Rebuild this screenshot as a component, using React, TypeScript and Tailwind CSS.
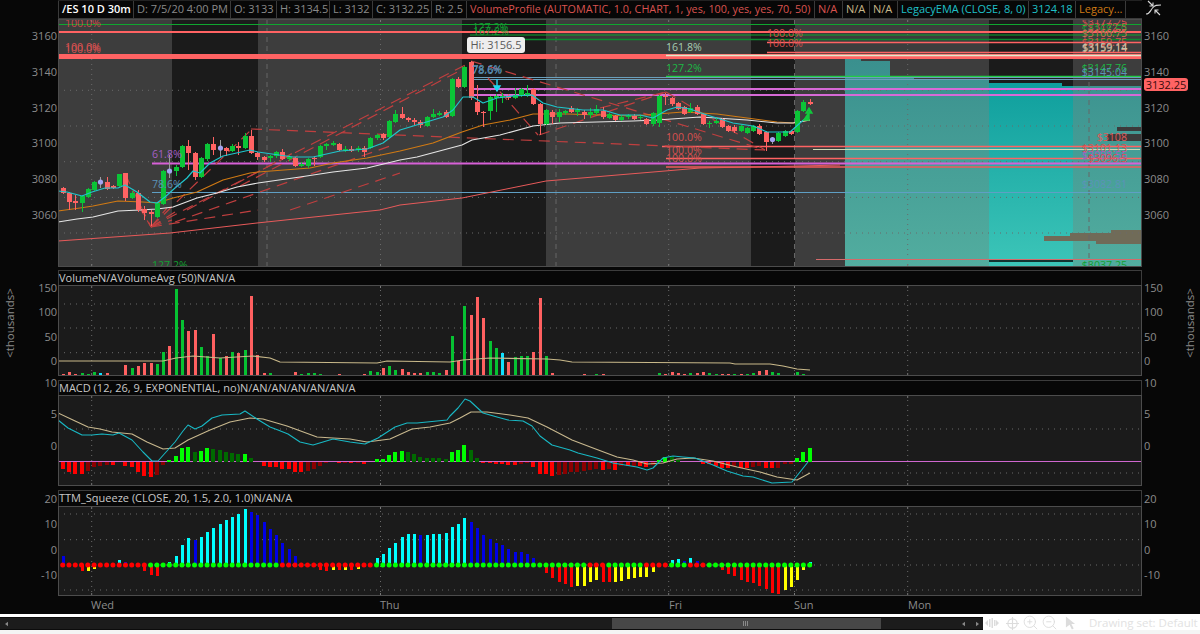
import React from "react";
import { ZoomIn, ZoomOut } from "lucide-react";

const X = (i: number) => 62.7 + 6.277 * i;
const GREEN = "#0bc437";
const RED = "#ff6363";

// top, bottom, wickTop, wickBottom, type
type C = [number, number, number, number, "g" | "r" | "d"];
const candles: C[] = [
  [188, 193, 187, 194, "r"], [193, 202, 192, 210, "r"], [201, 203, 195, 210, "r"], [196, 203, 195, 212, "g"],
  [189, 197, 188, 198, "g"], [182, 190, 181, 191, "g"], [182, 183, 177, 188, "d"], [182, 188.5, 177, 190, "r"],
  [186, 187.5, 185, 189, "r"], [174, 186, 174, 187, "g"], [173, 198, 173, 201, "r"], [193, 198, 191, 199, "g"],
  [193, 210, 190, 212, "r"], [209, 213, 206, 220, "r"], [212, 214, 210, 226, "r"], [203, 217, 202, 218, "g"],
  [171, 204, 170, 205, "g"], [171, 172, 155, 178, "d"], [167, 171, 165, 176, "g"], [146, 167, 145, 168, "g"],
  [146, 153, 140, 170, "r"], [153, 177, 152, 180, "r"], [158, 177, 157, 178, "g"], [144, 159, 143, 161, "g"],
  [144, 150, 137, 155, "r"], [148, 149, 140, 157, "d"], [148, 151, 147, 156, "r"], [146, 151, 144, 152, "g"],
  [146, 147.5, 142, 155, "r"], [136, 148, 133, 149, "g"], [136, 153, 130, 154, "r"], [153, 157, 152, 160, "r"],
  [157, 160, 156, 162, "r"], [156, 158, 155, 162, "g"], [152, 156, 151, 158, "g"], [152, 159, 149, 160, "r"],
  [157, 159, 155, 161, "g"], [158, 166, 157, 167, "r"], [164, 166, 162, 167, "g"], [159, 166, 158, 168, "g"],
  [158, 159, 156, 166, "r"], [146, 157, 145, 158, "g"], [144, 146, 143, 150, "g"], [143, 145, 141, 146, "g"],
  [144, 150, 143, 151, "r"], [149, 151, 146, 152, "g"], [149, 151, 146, 152, "r"], [148, 150, 146, 152, "g"],
  [148, 152, 146, 157, "r"], [138, 148, 137, 149, "g"], [135, 138, 134, 140, "g"], [134, 138, 133, 140, "r"],
  [121, 137, 120, 138, "g"], [114, 122, 110, 123, "g"], [114, 118, 107, 119, "r"], [118, 120, 117, 122, "r"],
  [120, 122, 118, 125, "r"], [122, 125, 120, 128, "r"], [117, 126, 116, 127, "g"], [114, 117, 109, 118, "g"],
  [113, 115, 111, 116, "g"], [112, 117, 110, 118, "r"], [79, 116, 78, 117, "g"], [79, 87, 77, 88, "r"],
  [67, 87, 66, 88, "g"], [62, 98, 61, 100, "r"], [102, 112, 85, 115, "r"], [111.5, 113, 111, 127, "r"],
  [97, 111, 96, 120, "g"], [96, 97.5, 94, 112, "g"], [95.5, 97, 93, 103, "g"], [96, 98, 94, 100, "r"],
  [95, 98, 88, 99, "g"], [89, 96, 88, 97, "g"], [93, 95, 85, 97, "g"], [89, 104, 88, 105, "r"],
  [104, 124, 103, 135, "r"], [110, 124, 109, 125, "g"], [112, 117, 110, 124, "r"], [112, 117, 109, 122, "g"],
  [111, 113, 110, 115, "g"], [108, 112, 106, 113, "r"], [110, 112, 108, 116, "g"], [112, 115, 110, 119, "r"],
  [112, 115, 108, 118, "g"], [109, 113, 105, 115, "g"], [111, 117, 107, 119, "r"], [114, 118, 113, 119, "g"],
  [116, 120, 115, 121, "r"], [117, 120, 115, 121, "g"], [115, 117, 114, 119, "g"], [116, 119, 114, 120, "r"],
  [116.5, 118, 115, 120, "g"], [119, 124, 118, 125, "r"], [113, 124, 112, 126, "g"], [96, 123, 95, 127, "g"],
  [95.5, 97, 93, 105, "r"], [98, 104, 97, 106, "r"], [103, 109, 102, 110, "r"], [107, 114, 106, 115, "r"],
  [108, 112, 103, 113, "g"], [107, 114, 105, 115, "r"], [114, 124, 113, 125, "r"], [122.5, 124, 121, 128, "g"],
  [121, 122.5, 118, 124, "g"], [119, 127, 118, 128, "r"], [126, 131, 125, 132, "r"], [127, 131, 125, 133, "r"],
  [126, 131, 125, 132, "g"], [128, 133, 127, 134, "g"], [126, 131, 125, 132, "g"], [126, 134, 124, 135, "r"],
  [132, 142, 131, 151, "r"], [139.5, 140.5, 137, 144, "d"], [133, 141, 132, 142, "g"], [131, 136, 130, 137, "g"],
  [131, 134, 130, 135, "r"], [111, 132, 110, 133, "g"], [102, 111, 100, 112, "g"], [102, 103.5, 99, 105, "r"],
];

const vol = [
  -4, -10, -5, 7, 5, 10, 8, -8, 2, 2, -32, 22, -29, -37, -39, 35, 70, -88, 260, 168,
  -135, -138, 85, 60, -125, 53, -58, 72, -68, 78, -240, -62, -8, 8, 2, -2, -2, -12, 6, 8,
  8, 6, 2, 2, -6, 0, -2, 2, -6, 14, 11, -22, 30, 18,
  -20, -12, -7, -7, 12, 10, 7, -18, 120, -45, 210, -182, -237, -172, 105, 82, 68, -42, 55, 60,
  58, -72, -232, 60, -8, 0, 0, 0, -2, -5, 2, 5, -5, 2, -2, 0, 0, -2, 0, 0,
  2, 7, -5, -10, -7, -5, 7, -7, -10, 7, 4, -5, -5, 5, -5, 5, 7, -15, -17, 10,
  7, 2, -2, 12, 5, 0,
];

const macd = [
  -22, -30, -36, -36, -27, -16, -12, -10, -10, -2,
  -14, -16, -30, -42, -46, -40, -10, 6, 18, 40,
  45, 28, 32, 40, 38, 34, 28, 26, 22, 23,
  10, -2, -12, -16, -16.5, -22, -22.5, -30, -32, -28,
  -22, -12, -4, 0, -4, -3, -4, -3, -6, 0,
  8, 9, 20, 28,
  32, 28, 24, 15, 12, 12, 12, 8, 28, 34,
  50, 34, 10, -4, -5, -6, -8, -10, -10.5, -6,
  -5.5, -16, -36, -38, -42, -40, -36, -32, -31, -28,
  -26, -22, -24, -22, -24, -14, -14, -12, -14, -16,
  -10, 6, 14, 13, 6, 0, 0, 0, -6, -8,
  -12, -18, -18.5, -14, -20, -20, -16, -14, -18, -20,
  -18, -8, -6, 10, 28, 40,
];

const ttm = [
  26, 0, 0, -18, -17, -12, 0, 0, 0, 16,
  10, 0, 0, -18, -30, -32, -6, 10, 28, 60,
  80, 75, 83, 98, 110, 124, 134, 145, 152, 168,
  160, 150, 130, 108, 90, 65, 48, 26, 0, 0,
  0, -14, -18, -14, -16, -14, -16, -12, -6, 0,
  22, 32, 50, 66,
  83, 92, 94, 90, 91, 92, 94, 95, 114, 124,
  142, 130, 112, 90, 78, 66, 60, 48, 40, 39,
  34, 22, 0, -24, -38, -50, -58, -66, -64, -63,
  -52, -46, -50, -52, -51, -48, -42, -40, -36, -35,
  -22, 0, 0, 16, 18, 12, 20, 12, 0, 0,
  0, -16, -26, -34, -44, -50, -54, -62, -72, -85,
  -86, -76, -66, -44, -14, 8,
];

const redDot = (i: number) =>
  i <= 13 || (i >= 35 && i <= 49) || (i >= 84 && i <= 86) || (i >= 93 && i <= 96) || (i >= 100 && i <= 102);

const pts = (a: number[][]) => a.map((p) => p.join(",")).join(" ");

const ema8 = [[58,191],[67,192],[82,196],[92,192],[105,188],[118,188],[125,185],[137,192],[150,202],[157,203],[165,197],[175,188],[187,178],[193,171],[200,173],[210,163],[223,156],[250,150],[258,152],[293,157],[313,157],[340,151],[367,149],[383,143],[400,130],[443,117],[453,110],[463,97],[473,97],[483,103],[497,98],[513,96],[532,95],[543,103],[557,107],[583,110],[603,110],[620,115],[640,115],[653,118],[667,110],[677,107],[690,109],[707,115],[733,123],[753,126],[767,132],[790,132],[800,123],[806,118]];
const emaOrange = [[58,211],[80,208],[93,206],[118,201],[143,202],[157,203],[173,198],[197,192],[223,180],[250,173],[258,172],[310,168],[333,163],[367,158],[400,151],[433,143],[462,132],[483,125],[510,120],[533,114],[567,114],[633,116],[657,114],[683,112],[717,114],[747,118],[777,122],[793,123],[810,120]];
const emaWhite = [[58,222],[77,219],[93,217],[118,211],[140,210],[157,209],[173,207],[197,198],[217,193],[237,187],[258,183],[300,177],[333,172],[367,168],[400,160],[417,157],[462,145],[472,140],[500,135],[533,126],[560,123],[633,121],[657,120],[700,117],[747,120],[777,123],[793,123],[810,120]];
const sma200 = [[58,241],[170,233],[257,223],[380,210],[400,205],[462,198],[546,181],[665,171],[700,168],[800,166],[840,165]];

const macdCyan = [[58,420],[68,428],[82,435],[92,435],[102,434],[113,435],[119,433],[132,440],[143,452],[152,461],[158,461],[175,442],[183,431],[188,425],[195,429],[202,426],[212,418],[222,415],[240,414],[245,411],[257,419],[270,427],[278,430],[288,434],[300,442],[313,445],[333,439],[350,442],[365,444],[378,438],[395,427],[407,423],[417,423],[447,420],[450,416],[458,408],[465,399],[470,401],[483,413],[497,417],[508,420],[523,421],[532,426],[540,436],[552,445],[570,450],[578,453],[597,458],[613,463],[637,467],[647,470],[653,468],[663,458],[673,456],[683,457],[695,458],[713,465],[727,471],[743,476],[753,477],[772,483],[792,482],[808,462]];
const macdTan = [[58,413],[73,420],[88,427],[100,429],[112,432],[132,434],[147,442],[163,449],[175,448],[188,440],[210,430],[230,422],[250,418],[263,419],[287,426],[317,437],[333,438],[350,439],[367,442],[390,439],[412,429],[430,427],[450,423],[460,418],[471,412],[487,412],[510,415],[528,418],[547,427],[572,440],[593,448],[617,457],[633,460],[647,464],[663,463],[677,459],[693,458],[713,461],[737,467],[760,472],[777,477],[797,480],[810,473]];
const volAvg = [[58,361],[163,361],[176,358],[193,356],[220,358],[253,356],[270,358],[280,362],[377,363],[387,361],[450,362],[463,360],[490,358],[547,359],[560,360],[572,362],[730,363],[735,364],[770,364],[783,366],[797,369],[810,370]];

type L = [number, number, number, number];
const trend: L[] = [
  [151, 227, 471, 62], [240, 186, 465, 68], [151, 227, 252, 129], [175, 222, 393, 145], [187, 210, 293, 153],
  [290, 210, 400, 173], [151, 227, 258, 210], [151, 227, 175, 212], [151, 227, 167, 208], [151, 227, 172, 220],
  [251, 129, 765, 150], [471, 61, 765, 150], [488, 78, 538, 135], [539, 135, 666, 92], [600, 108, 666, 92],
  [666, 92, 765, 150], [125, 174, 151, 227], [138, 205, 151, 227],
];

type H = [number, number, number, string, number];
const hlines: H[] = [
  [58, 1142, 24.5, "#0fa62f", 1], [470, 1142, 35, "#0fa62f", 1], [470, 1142, 39.5, "#0b8a2e", 1.5],
  [58, 1142, 32, "#ff6363", 2], [767, 1142, 42.5, "#ff6363", 1.5], [767, 1142, 52.5, "#ff6363", 1.5],
  [58, 1142, 56.5, "#ff6363", 5], [666, 1142, 55.5, "#dfe9c9", 1.5],
  [666, 1142, 76.5, "#22cc44", 1.5], [470, 1142, 77.5, "#6b9fbc", 1], [470, 1142, 79.5, "#6b9fbc", 1],
  [472, 1142, 89, "#d76ad7", 2], [472, 1142, 95, "#d76ad7", 2],
  [662, 1142, 146.5, "#ff6363", 1.5], [813, 1140, 149.5, "#cfd9b5", 1], [666, 1142, 158.5, "#ff6363", 1.5],
  [152, 1142, 163.5, "#d760d7", 2], [666, 1142, 167, "#f05a5a", 1.5], [152, 1142, 192.5, "#5f9fc4", 1],
  [989, 1073, 261, "#050505", 1.5], [816, 1142, 259.5, "#d46a6a", 1],
];

type T = [string, number, number, string, "start" | "end"?];
const labels: T[] = [
  ["100.0%", 65, 26.5, "#c94b4b"], ["100.0%", 65, 50.5, "#d85050"], ["100.0%", 65, 52.5, "#d85050"],
  ["61.8%", 152, 158, "#a45fc4"], ["78.6%", 152, 188, "#5b93b8"], ["127.2%", 152, 268.5, "#12a032"],
  ["127.2%", 472.5, 30.5, "#12a032"], ["167.2%", 473, 35, "#12a032"], ["78.6%", 472, 74, "#5b93b8"], ["78.6%", 472.5, 72.5, "#5b93b8"],
  ["161.8%", 666, 51, "#a6cdb2"], ["127.2%", 666, 71.5, "#1cb845"],
  ["100.0%", 666, 141, "#d85050"], ["100.0%", 666, 154, "#d85050"], ["100.0%", 666, 162, "#d85050"],
  ["100.0%", 767, 37, "#d85050"], ["100.0%", 767, 47, "#d85050"],
  ["$3177.25", 1127, 26, "#d85050", "end"], ["$3172.5", 1127, 31, "#d85050", "end"], ["$3168.59", 1127, 33, "#12a032", "end"],
  ["$3166.75", 1127, 37, "#cf6a55", "end"], ["$3159.75", 1127, 46, "#d85050", "end"], ["$3159.14", 1127, 51.5, "#d8907f", "end"], ["$3159.14", 1127.4, 51, "#c4c6ab", "end"],
  ["$3147.76", 1127, 72, "#1cb845", "end"], ["$3145.04", 1127, 76, "#5b93b8", "end"],
  ["$3108", 1127, 141, "#e05a5a", "end"], ["$3101.13", 1127, 152, "#d85050", "end"], ["$3098.56", 1127, 159, "#a45fc4", "end"], ["$3096.5", 1127, 162, "#d85050", "end"],
  ["$3082.81", 1127, 187.5, "#5b93b8", "end"], ["$3037.25", 1127, 268.5, "#12a032", "end"],
];

const Grid = ({ ys, xs, dashX, top, bottom }: { ys: number[]; xs: number[]; dashX?: number[]; top: number; bottom: number }) => (
  <g>
    {ys.map((y) => <line key={y} x1={58} x2={1142} y1={y} y2={y} stroke="#6a6a6a" strokeWidth={1} strokeDasharray="1 5" />)}
    {xs.map((x) => <line key={x} x1={x} x2={x} y1={top} y2={bottom} stroke="#6a6a6a" strokeWidth={1} strokeDasharray="1 4" />)}
    {xs.map((x) => <line key={"t" + x} x1={x} x2={x} y1={bottom - 3} y2={bottom} stroke="#777" strokeWidth={1} />)}
    {xs.map((x) => <line key={"u" + x} x1={x} x2={x} y1={top} y2={top + 3} stroke="#777" strokeWidth={1} />)}
    {(dashX || []).map((x) => <line key={"d" + x} x1={x} x2={x} y1={top} y2={bottom} stroke="#666" strokeWidth={1} strokeDasharray="5 4" />)}
  </g>
);

const Frame = ({ top, h }: { top: number; h: number }) => (
  <rect x={58.5} y={top + 0.5} width={1083} height={h - 1} fill="none" stroke="#4c4c4c" />
);

const Line = ({ p, c, w = 1.2 }: { p: number[][]; c: string; w?: number }) => (
  <polyline points={pts(p)} fill="none" stroke={c} strokeWidth={w} strokeLinejoin="round" />
);

function MainChart() {
  return (
    <svg viewBox="58 19 1084 248" className="block w-[1084px] h-[248px]">
      <defs>
        <linearGradient id="tl" gradientUnits="userSpaceOnUse" x1="0" y1="60" x2="0" y2="266">
          <stop offset="0" stopColor="#3a908e" /><stop offset="1" stopColor="#52ad9f" />
        </linearGradient>
        <linearGradient id="td" gradientUnits="userSpaceOnUse" x1="0" y1="60" x2="0" y2="266">
          <stop offset="0" stopColor="#0a9a9a" /><stop offset="1" stopColor="#3cc5b8" />
        </linearGradient>
      </defs>
      <rect x={58} y={19} width={1084} height={248} fill="#3d3d3d" />
      {[[172, 86], [462, 84], [751, 44], [989, 84]].map(([x, w]) => <rect key={x} x={x} y={19} width={w} height={248} fill="#1b1b1b" />)}
      {[[845, 16, 59, "tl"], [861, 29, 60.5, "tl"], [890, 24, 76, "tl"], [914, 75, 79, "tl"], [989, 73, 83, "td"], [1062, 11, 86, "td"], [1073, 69, 86, "tl"]].map(([x, w, t, g]) => (
        <rect key={x as number} x={x as number} y={t as number} width={w as number} height={267 - (t as number)} fill={`url(#${g})`} shapeRendering="crispEdges" />
      ))}
      <rect x={1117} y={127} width={25} height={4} fill="#3b3b3b" />
      <rect x={1107} y={134} width={35} height={7} fill="#3b3b3b" />
      <path d="M1044 236h26v-3h41v-3h31v14h-46v-3h-52z" fill="#706b58" />
      <Grid ys={[54.6, 90.3, 126, 161.7, 197.4, 233]} xs={[91.7, 380.5, 668.7, 907.7]} dashX={[267, 556, 794.5, 1089]} top={19} bottom={267} />

      {hlines.map(([a, b, y, c, w], i) => <line key={i} x1={a} x2={b} y1={y} y2={y} stroke={c} strokeWidth={w} />)}
      <Line p={sma200} c="#e85a5a" w={1} />
      {trend.map(([a, b, c, d], i) => <line key={i} x1={a} y1={b} x2={c} y2={d} stroke="#c03f3f" strokeWidth={1.2} strokeDasharray="11 7" />)}
      <Line p={emaOrange} c="#d07a14" />
      <Line p={emaWhite} c="#e6e6e6" w={1.1} />

      {candles.map(([t, b, wt, wb, k], i) => {
        const x = Math.round(X(i)) + 0.5;
        if (k === "d") {
          return (
            <g key={i}>
              <line x1={x} x2={x} y1={wt} y2={wb} stroke="#9c9c9c" />
              <circle cx={x} cy={t} r={2.6} fill="#a4a4f2" />
            </g>
          );
        }
        const col = k === "g" ? GREEN : RED;
        return (
          <g key={i} shapeRendering="crispEdges">
            <line x1={x} x2={x} y1={wt} y2={wb} stroke={col} />
            <rect x={x - 2.5} y={t} width={5} height={Math.max(b - t, 1)} fill={col} />
          </g>
        );
      })}
      <Line p={ema8} c="#1fc6cc" />
      <path d="M497 79v9M494 86l3 5 3-5z" stroke="#21d6f0" strokeWidth={1.4} fill="#21d6f0" />
      <path d="M803 120h6v-9M806 113l3-5 3 5z" stroke="#12c83c" strokeWidth={1.4} fill="#12c83c" />

      {labels.map(([s, x, y, c, a], i) => (
        <text key={i} x={x} y={y} fill={c} fontSize={10.6} textAnchor={a || "start"}>{s}</text>
      ))}
      <Frame top={19} h={248} />
    </svg>
  );
}

function VolumeChart() {
  const base = 375.5;
  return (
    <svg viewBox="58 285 1084 91" className="block w-[1084px] h-[91px]">
      <rect x={58} y={285} width={1084} height={91} fill="#1b1b1b" />
      <Grid ys={[304, 328, 352.7]} xs={[91.7, 380.5, 668.7, 794.5, 907.7]} top={285} bottom={376} />
      {vol.map((v, i) => {
        if (v === 0) return null;
        const h = Math.abs(v) / 3;
        const c = i === 6 || i === 70 ? "#10e0ff" : v > 0 ? "#06c232" : "#ff6060";
        return <rect key={i} x={Math.round(X(i)) - 1} y={base - h} width={3} height={h} fill={c} shapeRendering="crispEdges" />;
      })}
      <Line p={volAvg} c="#c9b98a" />
      <Frame top={285} h={91} />
    </svg>
  );
}

function MacdChart() {
  const zero = 461.5;
  return (
    <svg viewBox="58 395 1084 91" className="block w-[1084px] h-[91px]">
      <rect x={58} y={395} width={1084} height={91} fill="#1b1b1b" />
      <Grid ys={[429, 473]} xs={[91.7, 380.5, 668.7, 794.5, 907.7]} top={395} bottom={486} />
      <line x1={58} x2={1142} y1={zero} y2={zero} stroke="#cf67cf" strokeWidth={1} />
      {macd.map((v, i) => {
        if (v === 0) return null;
        const prev = i > 0 ? macd[i - 1] : v;
        const up = v > prev;
        const c = v > 0 ? (up ? "#00ff00" : "#006a00") : up ? "#8b0000" : "#ff0000";
        const h = Math.abs(v) / 3;
        return <rect key={i} x={Math.round(X(i)) - 2} y={v > 0 ? zero - h : zero} width={4} height={h} fill={c} shapeRendering="crispEdges" />;
      })}
      <Line p={macdTan} c="#c8b88e" w={1.1} />
      <Line p={macdCyan} c="#18b8c4" w={1.1} />
      <Frame top={395} h={91} />
    </svg>
  );
}

function TtmChart() {
  const zero = 565;
  return (
    <svg viewBox="58 506 1084 90" className="block w-[1084px] h-[90px]">
      <rect x={58} y={506} width={1084} height={90} fill="#1b1b1b" />
      <Grid ys={[514, 539.7, 565, 590]} xs={[91.7, 380.5, 668.7, 794.5, 907.7]} top={506} bottom={596} />
      {ttm.map((v, i) => {
        if (v === 0) return null;
        const prev = i > 0 ? ttm[i - 1] : 30;
        const up = v > prev;
        const c = v > 0 ? (up ? "#00ffff" : "#0000e6") : up ? "#ffff00" : "#ff0000";
        const h = Math.abs(v) / 3;
        return <rect key={i} x={Math.round(X(i)) - 1} y={v > 0 ? zero - h : zero} width={3} height={h} fill={c} shapeRendering="crispEdges" />;
      })}
      {ttm.map((_, i) => <circle key={i} cx={X(i)} cy={zero} r={2.5} fill={redDot(i) ? "#ff0000" : "#00ff00"} />)}
      <Frame top={506} h={90} />
    </svg>
  );
}

const Tick = ({ y, side, children }: { y: number; side: "l" | "r"; children: React.ReactNode }) => (
  <span
    className={`absolute h-[16px] leading-[16px] text-[11px] text-[#8b8b8b] whitespace-nowrap ${side === "l" ? "right-[1px]" : "left-[2px]"}`}
    style={{ top: y - 8 }}
  >
    {children}
  </span>
);

const Pane = ({ top, height, ticks, left, right, children }: { top: number; height: number; ticks: [number, string][]; left?: React.ReactNode; right?: React.ReactNode; children: React.ReactNode }) => (
  <div className="flex" style={{ height }}>
    <div className="relative w-[58px] shrink-0">
      {ticks.map(([y, s]) => <Tick key={s + y} y={y - top} side="l">{s}</Tick>)}
      {left}
    </div>
    <div className="w-[1084px] shrink-0 flex flex-col">{children}</div>
    <div className="relative w-[58px] shrink-0">
      {ticks.map(([y, s]) => <Tick key={s + y} y={y - top} side="r">{s}</Tick>)}
      {right}
    </div>
  </div>
);

const StudyHeader = ({ h, children }: { h: string; children: string }) => (
  <div className={`${h} flex items-center bg-[#070707] border-x border-t border-[#3c3c3c] text-[11px] text-[#c8c8c8] whitespace-nowrap`}>{children}</div>
);

const cells: [string, string][] = [
  ["/ES 10 D 30m", "w-[75px] text-white font-semibold"],
  ["D: 7/5/20 4:00 PM", "w-[97px] text-[#8a8a8a]"],
  ["O: 3133", "w-[46px] text-[#8a8a8a]"],
  ["H: 3134.5", "w-[53px] text-[#8a8a8a]"],
  ["L: 3132", "w-[43px] text-[#8a8a8a]"],
  ["C: 3132.25", "w-[59px] text-[#8a8a8a]"],
  ["R: 2.5", "w-[35px] text-[#8a8a8a]"],
  ["VolumeProfile (AUTOMATIC, 1.0, CHART, 1, yes, 100, yes, yes, 70, 50)", "w-[348px] text-[#d9534f] text-[10.8px]"],
  ["N/A", "w-[28px] text-[#d9534f]"],
  ["N/A", "w-[27px] text-[#c9b98a]"],
  ["N/A", "w-[28px] text-[#c9b98a]"],
  ["LegacyEMA (CLOSE, 8, 0)", "w-[131px] text-[#1fc0c8]"],
  ["3124.18", "w-[47px] text-[#1fc0c8]"],
  ["Legacy...", "w-[50px] text-[#d07a14]"],
  ["", "w-[17px]"],
];

const thousands = (
  <span className="absolute left-[-1px] top-[45px] w-[22px] h-[16px] leading-[16px] text-[11.5px] text-[#8b8b8b] whitespace-nowrap origin-center -rotate-90 flex justify-center">&lt;thousands&gt;</span>
);

export default function App() {
  return (
    <div className="w-[1200px] h-[634px] bg-[#070707] flex flex-col overflow-hidden font-['Open_Sans','Liberation_Sans',sans-serif]">
      <Pane
        top={0}
        height={267}
        ticks={[[36, "3160"], [72, "3140"], [108, "3120"], [143, "3100"], [179, "3080"], [215, "3060"]]}
        right={
          <>
            <svg viewBox="0 0 18 18" className="absolute left-[3px] top-0 w-[18px] h-[18px]" fill="none" stroke="#d8d8d8" strokeWidth={1.1}>
              <path d="M1 14c4 0 4-3 6.5-6S12 5 16 5" />
              <path d="M3 1l5 5M4.5 6H8V2.5" />
              <path d="M15 15l-5-5M13.5 10H10v3.5" />
            </svg>
            <span className="absolute left-[2px] top-[78px] w-[44px] h-[13px] rounded-[3px] bg-[#ff6363] text-[#3a0c0c] text-[11px] leading-[13px] text-center">3132.25</span>
          </>
        }
      >
        <div className="h-[19px] flex bg-[#070707] text-[11px] border-t border-[#222]">
          {cells.map(([s, c], i) => (
            <div key={i} className={`${c} shrink-0 flex items-center pl-[3px] overflow-hidden whitespace-nowrap border-l border-[#3a3a3a] border-b`}>
              {s}
            </div>
          ))}
        </div>
        <div className="relative">
          <MainChart />
          <div className="absolute left-[409px] top-[18px] w-[58px] h-[16px] rounded-[3px] bg-[#eeeeee] text-[#5a5a5a] text-[11px] leading-[16px] text-center whitespace-nowrap">Hi: 3156.5</div>
        </div>
      </Pane>

      <div className="mt-[3px]">
        <Pane top={270} height={106} ticks={[[288, "150"], [312, "100"], [337, "50"], [361, "0"]]} left={thousands} right={<div className="absolute left-[38px] top-0">{thousands}</div>}>
          <StudyHeader h="h-[15px]">VolumeN/AVolumeAvg (50)N/AN/A</StudyHeader>
          <VolumeChart />
        </Pane>
      </div>

      <div className="mt-[4px]">
        <Pane top={380} height={106} ticks={[[383, "10"], [414, "5"], [446, "0"]]}>
          <StudyHeader h="h-[15px]">MACD (12, 26, 9, EXPONENTIAL, no)N/AN/AN/AN/AN/AN/A</StudyHeader>
          <MacdChart />
        </Pane>
      </div>

      <div className="mt-[4px]">
        <Pane top={490} height={106} ticks={[[499, "20"], [524, "10"], [550, "0"], [575, "-10"]]}>
          <StudyHeader h="h-[16px]">TTM_Squeeze (CLOSE, 20, 1.5, 2.0, 1.0)N/AN/A</StudyHeader>
          <TtmChart />
        </Pane>
      </div>

      {/* time axis */}
      <div className="h-[18px] flex pl-[91px] text-[11px] leading-[18px] text-[#8b8b8b]">
        <span className="w-[289px]">Wed</span>
        <span className="w-[289px]">Thu</span>
        <span className="w-[125px]">Fri</span>
        <span className="w-[114px]">Sun</span>
        <span>Mon</span>
      </div>

      {/* bottom strip */}
      <div className="h-[20px] bg-white flex flex-col shrink-0">
        <div className="h-[3px]" />
        <div className="flex h-[13px]">
          <div className="w-[983px] shrink-0 h-[13px] flex bg-[#1c1c1c] border-y border-[#0c0c0c]">
            <div className="w-[612px] flex items-center pl-[5px]">
              <svg viewBox="0 0 4 6" className="w-[3px] h-[6px]"><path d="M4 0v6L0 3z" fill="#888" /></svg>
            </div>
            <div className="w-[269px] bg-[#474747] flex items-center pl-[131px]">
              <div className="w-[5px] h-[5px] border-x border-[#8a8a8a] flex justify-center"><div className="w-[1px] h-full bg-[#8a8a8a]" /></div>
            </div>
            <div className="flex-1 flex items-center justify-end gap-[11px] pr-[4px]">
              <svg viewBox="0 0 4 6" className="w-[3px] h-[6px]"><path d="M4 0v6L0 3z" fill="#888" /></svg>
              <svg viewBox="0 0 4 6" className="w-[3px] h-[6px]"><path d="M0 0v6l4-3z" fill="#888" /></svg>
            </div>
          </div>
          <div className="flex-1 flex items-center pl-[2px] text-[#dcdcdc] -mt-[1px]">
            <svg viewBox="0 0 14 10" className="w-[14px] h-[10px] mr-[7px] shrink-0" fill="#dcdcdc">
              <path d="M0 5l3-3v6zM14 5l-3-3v6zM4 1h1.5v8H4zM6.5 0h1.5v10H6.5zM9 2h1.5v6H9z" />
            </svg>
            <svg viewBox="0 0 14 14" className="w-[13px] h-[13px] mr-[3px] shrink-0" fill="none" stroke="#dcdcdc" strokeWidth={1.2}>
              <circle cx="7" cy="7" r="5" /><path d="M7 0v14M0 7h14" />
            </svg>
            <ZoomIn className="w-[17px] h-[17px] -mt-[2px] shrink-0" strokeWidth={1.3} />
            <ZoomOut className="w-[17px] h-[17px] -mt-[2px] ml-[2px] shrink-0" strokeWidth={1.3} />
            <svg viewBox="0 0 12 14" className="w-[11px] h-[14px] ml-[7px] shrink-0" fill="#dcdcdc"><path d="M1 0l10 8H7l2.5 5-2 1L5 9l-4 3z" /></svg>
            <span className="ml-[13px] text-[11.5px] text-[#e2e2e2] whitespace-nowrap">Drawing set: Default</span>
            <svg viewBox="0 0 4 4" className="w-[4px] h-[4px] ml-[3px] mt-[7px] shrink-0"><path d="M4 0v4H0z" fill="#dcdcdc" /></svg>
          </div>
        </div>
        <div className="h-[4px] bg-[#f4f4f4]" />
      </div>
    </div>
  );
}
